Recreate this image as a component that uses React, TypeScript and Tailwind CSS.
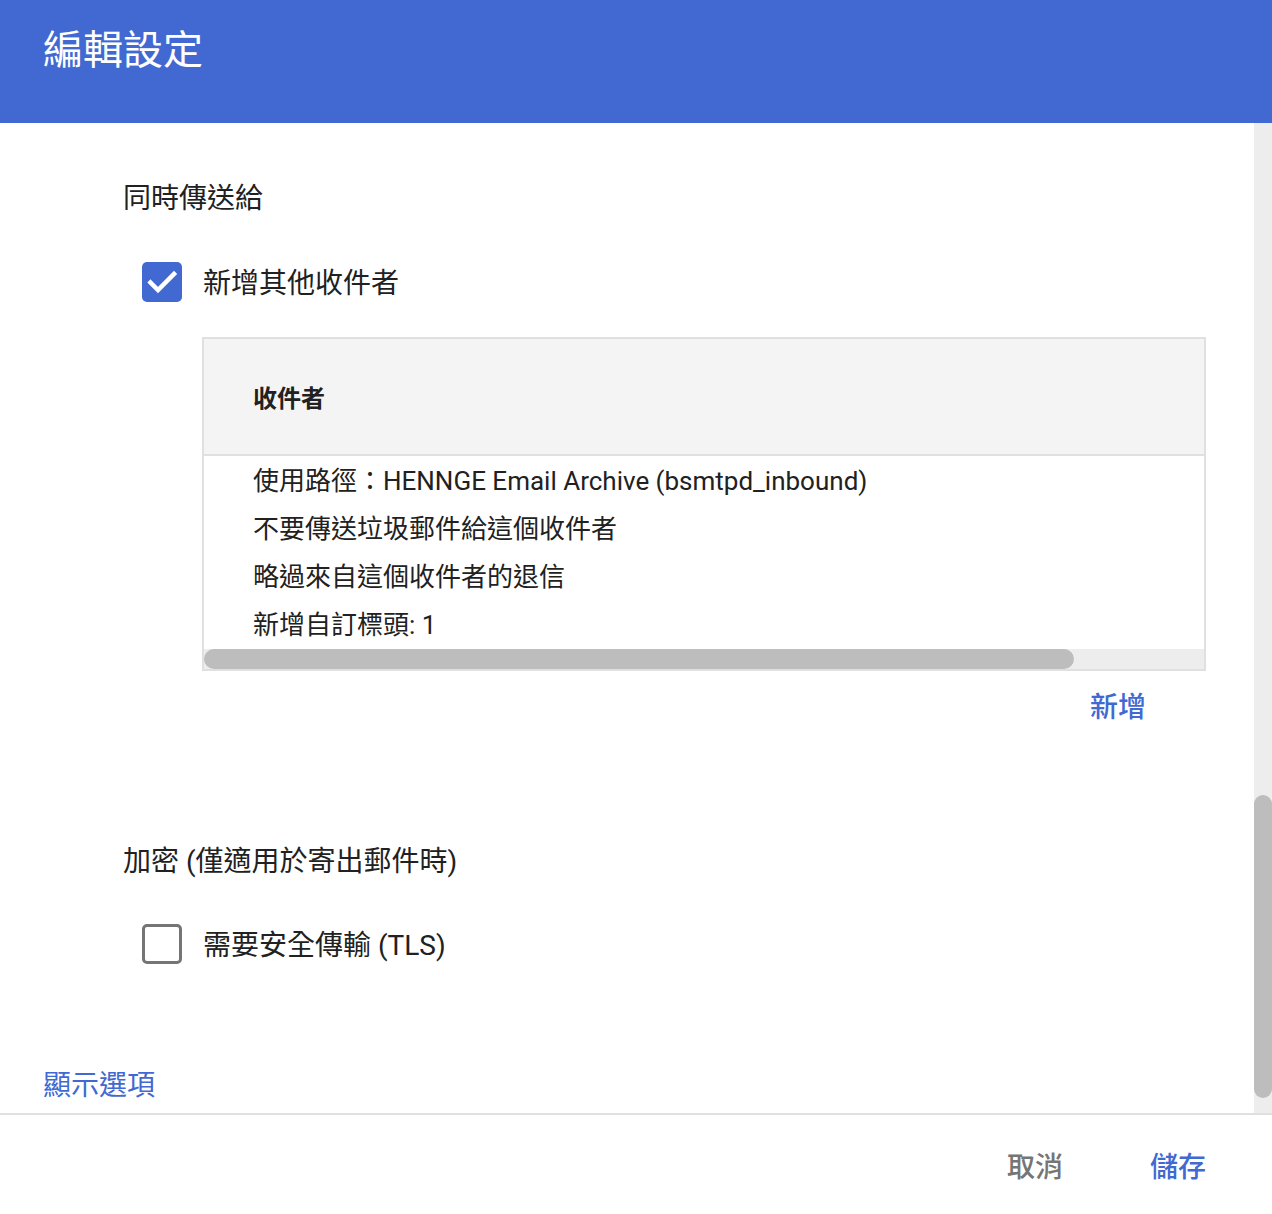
const font = { fontFamily: 'Roboto, "Noto Sans CJK TC", sans-serif' };

function Checkbox({ checked }: { checked: boolean }) {
    if (checked) {
        return (
            <span className="flex h-10 w-10 shrink-0 items-center justify-center rounded-[5px] bg-[#4169d1]">
                <svg width="40" height="40" viewBox="0 0 40 40" fill="none">
                    <path d="M8.5 20.5l7.5 7.5L32 12" stroke="white" strokeWidth="4.5" strokeLinecap="square" />
                </svg>
            </span>
        );
    }
    return <span className="h-10 w-10 shrink-0 rounded-[5px] border-[3px] border-[#757575] bg-white" />;
}

const rows = [
    '使用路徑：HENNGE Email Archive (bsmtpd_inbound)',
    '不要傳送垃圾郵件給這個收件者',
    '略過來自這個收件者的退信',
    '新增自訂標頭: 1',
];

export default function App() {
    return (
        <div className="flex h-[1214px] w-[1272px] flex-col overflow-hidden bg-white text-[#212121]" style={font}>
            <header className="flex h-[123px] shrink-0 items-start bg-[#4169d1] px-[43px] pt-[25px]">
                <h1 className="text-[40px] leading-[52px] text-white">編輯設定</h1>
            </header>

            <div className="flex h-[990px] shrink-0">
                <div className="flex-1 overflow-hidden">
                    <section className="pl-[123px] pt-[56px]">
                        <h2 className="text-[28px] leading-[40px]">同時傳送給</h2>
                        <label className="mt-[43px] ml-[19px] flex items-center gap-[21px]">
                            <Checkbox checked />
                            <span className="pt-[4px] text-[28px] leading-[36px]">新增其他收件者</span>
                        </label>
                    </section>

                    <div className="mt-[35px] ml-[202px] w-[1004px] border-2 border-[#e0e0e0]">
                        <div className="flex h-[117px] items-center border-b-2 border-[#e0e0e0] bg-[#f4f4f4] pl-[49px] pt-[4px]">
                            <span className="text-[24px] font-bold">收件者</span>
                        </div>
                        <div className="pl-[49px] pt-[1px]">
                            {rows.map((r) => (
                                <div key={r} className="text-[26px] leading-[48px] whitespace-nowrap">
                                    {r}
                                </div>
                            ))}
                        </div>
                        <div className="h-[20px] bg-[#ededed]">
                            <div className="h-full w-[870px] rounded-full bg-[#bdbdbd]" />
                        </div>
                    </div>

                    <div className="ml-[202px] flex w-[1004px] justify-end pr-[60px] pt-[17px]">
                        <button className="text-[28px] leading-[40px] font-medium text-[#4169d1]">新增</button>
                    </div>

                    <section className="pl-[123px] pt-[114px]">
                        <h2 className="text-[28px] leading-[40px]">加密 (僅適用於寄出郵件時)</h2>
                        <label className="mt-[42px] ml-[19px] flex items-center gap-[21px]">
                            <Checkbox checked={false} />
                            <span className="pt-[4px] text-[28px] leading-[36px]">需要安全傳輸 (TLS)</span>
                        </label>
                    </section>

                    <div className="pl-[43px] pt-[102px]">
                        <button className="text-[28px] leading-[40px] text-[#4169d1]">顯示選項</button>
                    </div>
                </div>
                <div className="flex w-[18px] flex-col bg-[#ededed] pt-[672px] pb-[15px]">
                    <div className="flex-1 rounded-full bg-[#bdbdbd]" />
                </div>
            </div>

            <footer className="flex flex-1 items-center justify-end gap-[87px] border-t-2 border-[#e0e0e0] pr-[66px] pt-[6px]">
                <button className="text-[28px] leading-[40px] font-medium text-[#757575]">取消</button>
                <button className="text-[28px] leading-[40px] font-medium text-[#4169d1]">儲存</button>
            </footer>
        </div>
    );
}
